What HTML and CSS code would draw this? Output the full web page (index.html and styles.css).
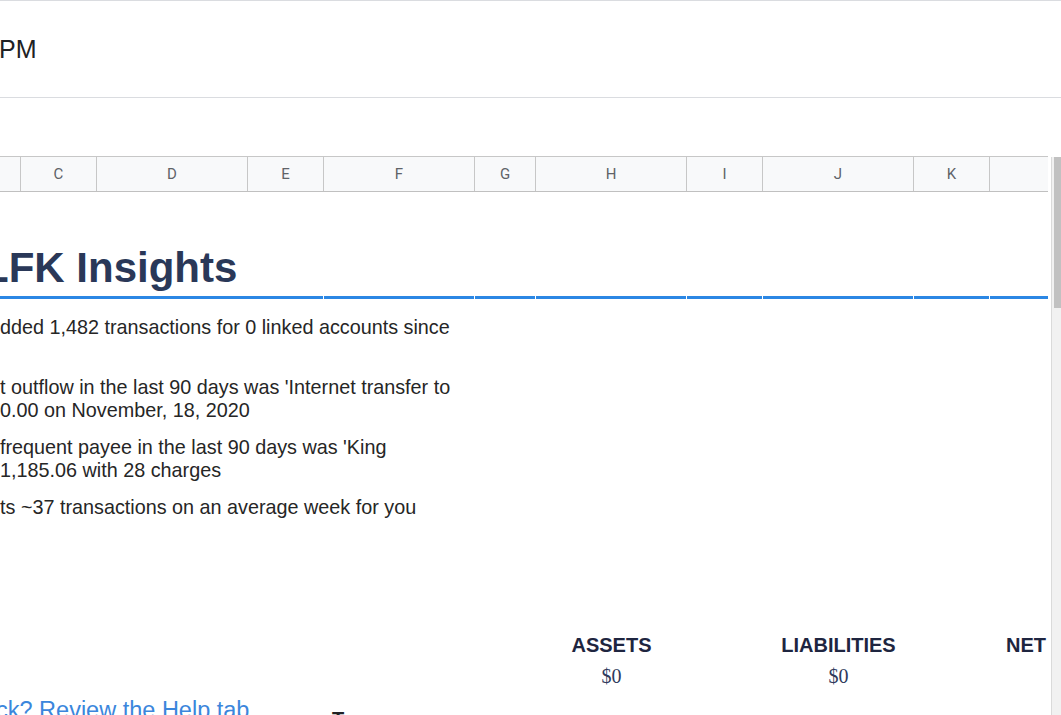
FILE: index.html
```html
<!DOCTYPE html>
<html lang="en">
<head>
    <meta charset="UTF-8">
    <title>LFK Insights</title>
    <link rel="stylesheet" href="styles.css">
</head>
<body>
    <div class="top-bar">
        <p class="doc-title">PM</p>
    </div>
    <div class="toolbar-space"></div>

    <div class="sheet">
        <div class="sheet-view">
            <div class="col-header cols">
                <div class="col-cell"></div>
                <div class="col-cell">C</div>
                <div class="col-cell">D</div>
                <div class="col-cell">E</div>
                <div class="col-cell">F</div>
                <div class="col-cell">G</div>
                <div class="col-cell">H</div>
                <div class="col-cell">I</div>
                <div class="col-cell">J</div>
                <div class="col-cell">K</div>
                <div class="col-cell"></div>
            </div>

            <div class="insights">
                <h1 class="insights-title">LFK Insights</h1>
                <div class="rule cols">
                    <div class="rule-cell wide"></div>
                    <div class="rule-cell"></div>
                    <div class="rule-cell"></div>
                    <div class="rule-cell"></div>
                    <div class="rule-cell"></div>
                    <div class="rule-cell"></div>
                    <div class="rule-cell"></div>
                    <div class="rule-cell"></div>
                </div>
                <ul class="facts">
                    <li>dded 1,482 transactions for 0 linked accounts since</li>
                    <li>t outflow in the last 90 days was 'Internet transfer to<br>0.00 on November, 18, 2020</li>
                    <li>frequent payee in the last 90 days was 'King<br>1,185.06 with 28 charges</li>
                    <li>ts ~37 transactions on an average week for you</li>
                </ul>
            </div>

            <div class="totals cols">
                <div class="total-label col-h">ASSETS</div>
                <div class="total-label col-j">LIABILITIES</div>
                <div class="total-label col-l">NET</div>
                <div class="total-value col-h">$0</div>
                <div class="total-value col-j">$0</div>
            </div>

            <div class="help cols">
                <a class="help-link" href="#">ck? Review the Help tab</a>
                <div class="help-mark">T</div>
            </div>
        </div>

        <div class="vscroll">
            <div class="vscroll-thumb"></div>
        </div>
    </div>
</body>
</html>
```

FILE: styles.css
```css
/* Global styles */
* {
    margin: 0;
    padding: 0;
    box-sizing: border-box;
}

html, body {
    height: 100%;
}

body {
    background-color: #fff;
    font-family: "Liberation Sans", Arial, sans-serif;
    color: #202124;
    overflow: hidden;
}

/* Top document bar */
.top-bar {
    height: 98px;
    border-top: 1px solid #dadce0;
    border-bottom: 1px solid #dadce0;
    padding-top: 33px;
}

.doc-title {
    font-size: 25px;
    line-height: 30px;
    margin-left: -1px;
    color: #202124;
}

.toolbar-space {
    height: 58px;
}

/* Spreadsheet area */
.sheet {
    display: flex;
    height: calc(100% - 156px);
}

.sheet-view {
    width: 1048px;
    overflow: hidden;
    flex-shrink: 0;
}

.cols {
    display: grid;
    grid-template-columns: 21px 76px 151px 76px 151px 61px 151px 76px 151px 76px 72px;
}

.col-header {
    height: 36px;
    border-top: 1px solid #c7c7c7;
    border-bottom: 1px solid #c0c0c0;
    background-color: #f8f9fa;
}

.col-cell {
    border-right: 1px solid #c7c7c7;
    font-family: Roboto, "Liberation Sans", sans-serif;
    font-size: 15px;
    line-height: 34px;
    text-align: center;
    color: #5f6368;
}

.col-cell:last-child {
    border-right: none;
}

/* Insights block */
.insights {
    padding-top: 52px;
    padding-bottom: 1px;
}

.insights-title {
    font-size: 42px;
    line-height: 48px;
    font-weight: bold;
    color: #2a3858;
    margin-left: -17px;
    white-space: nowrap;
}

.rule {
    margin-top: 4px;
    height: 3px;
}

.rule-cell {
    background-color: #2b87e4;
    margin-right: 1px;
}

.rule-cell.wide {
    grid-column: 1 / 5;
}

.facts {
    list-style: none;
    padding-top: 17px;
}

.facts li {
    font-size: 19.8px;
    line-height: 23px;
    min-height: 46px;
    margin-bottom: 14px;
    white-space: nowrap;
    color: #262626;
}

/* Totals */
.totals {
    margin-top: 77px;
    row-gap: 8px;
}

.total-label {
    font-size: 20px;
    line-height: 23px;
    font-weight: bold;
    text-align: center;
    color: #1e2540;
    grid-row: 1;
}

.total-value {
    font-family: "Liberation Serif", "Times New Roman", serif;
    font-size: 20px;
    line-height: 23px;
    text-align: center;
    color: #2e3a5c;
    grid-row: 2;
}

.col-h {
    grid-column: 7;
}

.col-j {
    grid-column: 9;
}

.col-l {
    grid-column: 11;
}

/* Help row */
.help {
    margin-top: 9px;
}

.help-link {
    grid-column: 1 / 5;
    font-size: 23.5px;
    line-height: 27px;
    color: #3b86dc;
    text-decoration: none;
    white-space: nowrap;
    margin-left: -4px;
}

.help-mark {
    grid-column: 5;
    padding-top: 11px;
    padding-left: 8px;
    font-size: 20px;
    line-height: 23px;
    font-weight: bold;
    color: #202124;
}

/* Vertical scrollbar */
.vscroll {
    width: 10px;
    margin-left: 3px;
    margin-top: 1px;
    border-left: 1px solid #dadada;
    padding-left: 2px;
    background-color: #f1f1f1;
}

.vscroll-thumb {
    height: 151px;
    background-color: #c1c1c1;
}
```
